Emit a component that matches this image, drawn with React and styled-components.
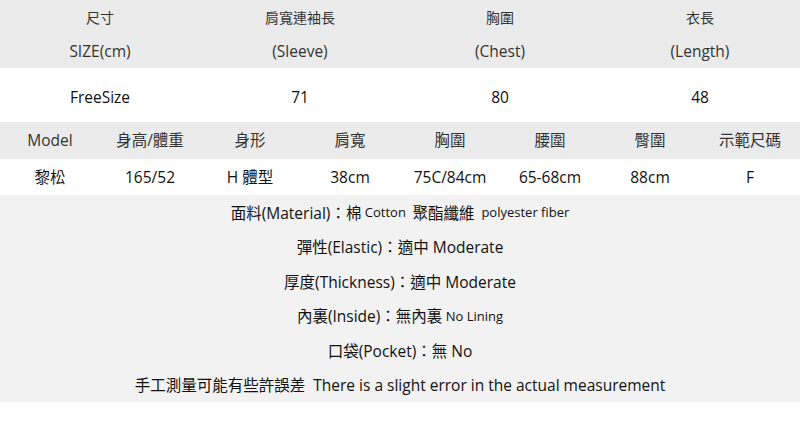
import React from 'react';
import styled, { createGlobalStyle } from 'styled-components';

const GlobalStyle = createGlobalStyle`
  html, body {
    margin: 0;
    padding: 0;
    background: #ffffff;
  }
  body {
    font-family: 'Open Sans', 'Noto Sans CJK TC', sans-serif;
    color: #111111;
  }
`;

const Page = styled.div`
  width: 800px;
`;

const Grid = styled.div`
  box-sizing: border-box;
  display: grid;
  grid-template-columns: repeat(${({ cols }) => cols}, 1fr);
  align-items: center;
  background: ${({ bg }) => bg || '#ffffff'};
  height: ${({ h }) => h}px;
  padding-top: ${({ shift }) => shift || 0}px;
`;

const Cell = styled.div`
  text-align: center;
  font-size: ${({ size }) => size || 15.5}px;
  color: ${({ muted }) => (muted ? '#333333' : '#111111')};
  white-space: nowrap;
  line-height: 1;
`;

const Info = styled.div`
  background: #f2f2f2;
  display: flex;
  flex-direction: column;
`;

const InfoLine = styled.div`
  height: 34.5px;
  display: flex;
  align-items: center;
  justify-content: center;
  font-size: 15.5px;
  color: #111111;
  white-space: nowrap;
`;

const Small = styled.span`
  font-size: 13px;
`;

const sizeHead = [
  ['尺寸', 'SIZE(cm)'],
  ['肩寬連袖長', '(Sleeve)'],
  ['胸圍', '(Chest)'],
  ['衣長', '(Length)'],
];

const sizeValues = ['FreeSize', '71', '80', '48'];

const modelHead = ['Model', '身高/體重', '身形', '肩寬', '胸圍', '腰圍', '臀圍', '示範尺碼'];
const modelValues = ['黎松', '165/52', 'H 體型', '38cm', '75C/84cm', '65-68cm', '88cm', 'F'];

const App = () => (
  <Page>
    <GlobalStyle />
    <Grid cols={4} bg="#ebebeb" h={36}>
      {sizeHead.map(([zh]) => (
        <Cell key={zh} muted size={14}>{zh}</Cell>
      ))}
    </Grid>
    <Grid cols={4} bg="#ebebeb" h={32}>
      {sizeHead.map(([zh, en]) => (
        <Cell key={zh} muted>{en}</Cell>
      ))}
    </Grid>
    <Grid cols={4} h={54} shift={5}>
      {sizeValues.map(v => (
        <Cell key={v}>{v}</Cell>
      ))}
    </Grid>
    <Grid cols={8} bg="#ebebeb" h={37}>
      {modelHead.map(v => (
        <Cell key={v} muted>{v}</Cell>
      ))}
    </Grid>
    <Grid cols={8} h={36} shift={2}>
      {modelValues.map(v => (
        <Cell key={v}>{v}</Cell>
      ))}
    </Grid>
    <Info>
      <InfoLine>
        面料(Material)：棉 <Small>&nbsp;Cotton&nbsp;&nbsp;</Small>聚酯纖維<Small>&nbsp;&nbsp;polyester fiber</Small>
      </InfoLine>
      <InfoLine>彈性(Elastic)：適中 Moderate</InfoLine>
      <InfoLine>厚度(Thickness)：適中 Moderate</InfoLine>
      <InfoLine>
        內裏(Inside)：無內裏 <Small>&nbsp;No Lining</Small>
      </InfoLine>
      <InfoLine>口袋(Pocket)：無 No</InfoLine>
      <InfoLine>手工測量可能有些許誤差&nbsp;&nbsp;There is a slight error in the actual measurement</InfoLine>
    </Info>
  </Page>
);

export default App;
